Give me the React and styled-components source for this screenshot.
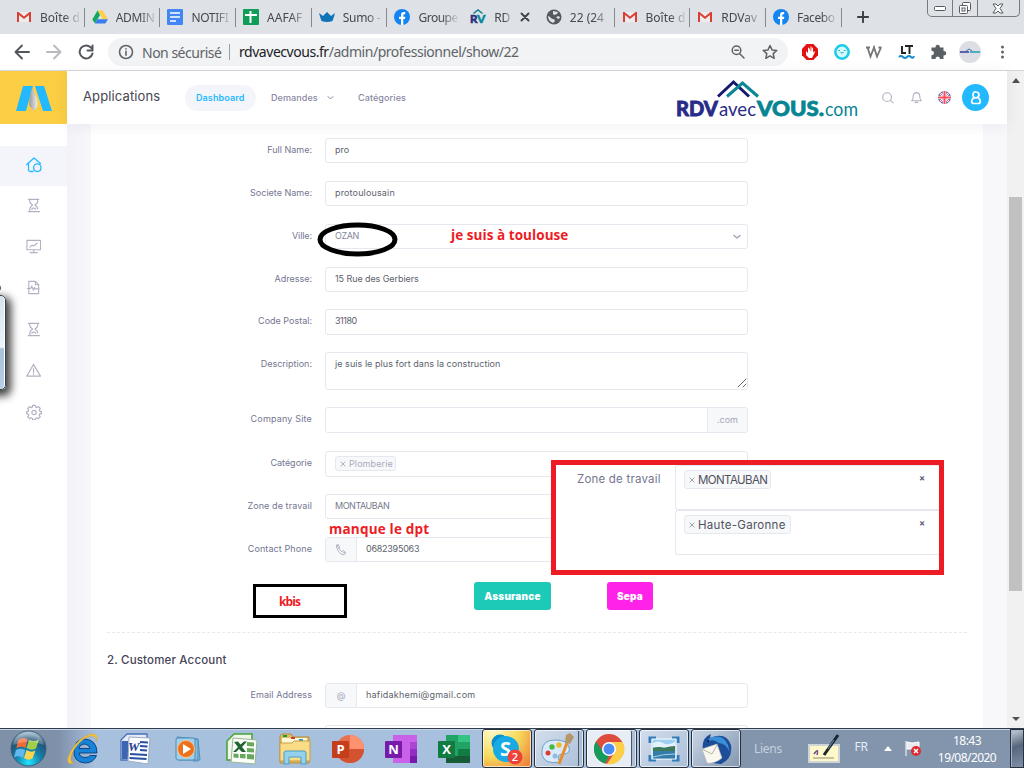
import React from "react";
import styled, { createGlobalStyle, css } from "styled-components";

const Global = createGlobalStyle`
  *, *::before, *::after { box-sizing: border-box; }
  body { margin: 0; overflow: hidden; }
`;
const ui = `"Noto Sans", "Open Sans", sans-serif`;
const web = `Inter, "Open Sans", sans-serif`;

const Screen = styled.div`
  position: relative; width: 1024px; height: 768px; overflow: hidden;
  display: flex; flex-direction: column; background: #fff; font-family: ${web};
`;

/* Browser chrome */
const TabStrip = styled.div`
  height: 34px; flex: none; display: flex; align-items: stretch; background: #dee1e6;
  padding-left: 8px; font: 12px ${ui}; color: #45494d;
`;
const Tab = styled.div`
  width: 75.7px; flex: none; padding-left: 8px; display: flex; align-items: center; gap: 8px; position: relative;
  svg { flex: none; }
  ${(p) => p.$line && css`&::after { content: ""; position: absolute; right: -1px; top: 8px; width: 1px; height: 19px; background: #85888c; }`}
  ${(p) => p.$active && css`background: #fff; border-radius: 8px 8px 0 0;`}
`;
const TabText = styled.span`
  width: ${(p) => p.$w || 38}px; white-space: nowrap; letter-spacing: ${(p) => p.$ls || 0}px;
  mask-image: linear-gradient(90deg, #000 60%, transparent 104%);
`;
const NewTab = styled.div`display: flex; align-items: center; padding-left: 16px; width: 86px;`;
const WindowButtons = styled.div`
  width: 93px; height: 17px; display: flex; border: 1px solid #777a80; border-top: 0; border-radius: 0 0 5px 5px;
`;
const WindowButton = styled.div`
  width: ${(p) => p.$w}px; display: flex; align-items: center; justify-content: center;
  & + & { border-left: 1px solid #777a80; }
`;
const Toolbar = styled.div`
  height: 37px; flex: none; display: flex; align-items: center; background: #fff; border-bottom: 1px solid #d4d7dc;
`;
const NavButtons = styled.div`display: flex; gap: 16px; padding-left: 14px; width: 108px; svg { flex: none; }`;
const Omnibox = styled.div`
  width: 680px; height: 28px; border-radius: 14px; background: #f1f3f4; display: flex; align-items: center;
  padding: 0 10px; font: 14px ${ui}; color: #5f6368; white-space: nowrap; svg { flex: none; }
`;
const Insecure = styled.span`margin-left: 8px; width: 87px; letter-spacing: -0.5px;`;
const Url = styled.span`border-left: 1px solid #9a9da1; line-height: 16px; padding-left: 9px; flex: 1; letter-spacing: -0.46px; b { font-weight: 400; color: #202124; }`;
const OmniIcons = styled.span`display: flex; gap: 16px;`;
const Extensions = styled.div`display: flex; align-items: center; padding-left: 6px; svg { width: 32px; height: 24px; }`;

/* Web page */
const Page = styled.div`height: 657px; flex: none; display: flex;`;
const Side = styled.aside`width: 67px; background: #fff; display: flex; flex-direction: column; z-index: 1;`;
const Brand = styled.div`height: 53px; background: #fbce44; display: flex; align-items: center; justify-content: center; margin-bottom: 22px;`;
const SideItem = styled.div`
  height: ${(p) => p.$h || 41.2}px; display: flex; align-items: center; justify-content: center; padding-bottom: 2px;
  background: ${(p) => (p.$on ? "#f4f5fb" : "transparent")}; color: ${(p) => (p.$on ? "#22b9ff" : "#b0b2c3")};
`;
const Main = styled.main`width: 940px; display: flex; flex-direction: column;`;
const Header = styled.header`
  height: 53px; flex: none; background: #fff; display: flex; align-items: center; padding-left: 16px; z-index: 1;
  box-shadow: 0 2px 14px rgba(82, 63, 105, 0.08);
`;
const AppTitle = styled.div`width: 102px; font-size: 13px; color: #46464f; letter-spacing: 0.12px; padding-bottom: 3px;`;
const NavLink = styled.div`
  height: 26px; border-radius: 13px; padding: 0 11px; display: flex; align-items: center; font-size: 9px; gap: 9px;
  width: ${(p) => p.$w}px; margin-right: ${(p) => p.$mr || 0}px; color: ${(p) => (p.$on ? "#22b9ff" : "#8a88a2")};
  background: ${(p) => (p.$on ? "#f4f5fb" : "none")};
  font-weight: ${(p) => (p.$on ? 600 : 500)}; letter-spacing: ${(p) => p.$ls || 0}px; white-space: nowrap;
  svg { flex: none; }
`;
const HeaderRight = styled.div`
  margin-left: auto; width: 332px; display: flex; align-items: center;
`;
const HeaderIcons = styled.div`display: flex; align-items: center; gap: 15px; margin-left: 22px;`;
const Avatar = styled.div`
  width: 27px; height: 27px; margin-left: -4px; border-radius: 50%; background: #22b9ff; display: flex; align-items: center; justify-content: center;
`;
const Backdrop = styled.div`
  flex: 1; padding: 0 24px; background: linear-gradient(90deg, #f2f2f8 0, #f8f8fb 24px);
`;
const Card = styled.section`height: 100%; overflow: hidden; background: #fff; padding: 14px 16px 0; display: flex; flex-direction: column;`;
const FieldRow = styled.div`
  display: flex; flex: none; height: ${(p) => p.$h || 25}px; margin-bottom: ${(p) => p.$gap || 18}px;
`;
const Label = styled.label`
  width: 205px; margin-right: 13px; text-align: right; font-size: 9px; line-height: 24px; color: #747691; letter-spacing: ${(p) => p.$ls || 0}px;
`;
const Field = styled.div`
  width: 423px; border: 1px solid #e6e8f0; border-radius: 3px; display: flex; font-size: 9px; color: #5c5f6c;
  line-height: 22px; letter-spacing: ${(p) => p.$ls || 0}px; overflow: hidden;
`;
const Value = styled.span`padding-left: 9px; flex: 1; color: ${(p) => p.$c || "inherit"};`;
const Addon = styled.span`
  width: ${(p) => p.$w}px; background: #f7f8fa; color: #a1a4b6; display: flex; align-items: center; justify-content: center;
  border: 0 solid #e6e8f0; border-${(p) => p.$edge}-width: 1px; letter-spacing: 0;
`;
const Chip = styled.span`
  border: 1px solid #e6e8f0; background: #f7f8fa; border-radius: 3px; white-space: nowrap; display: flex; align-items: center; gap: 3px;
  svg { flex: none; }
  ${(p) => p.$large
    ? css`height: 19px; padding: 0 3px 0 4px; color: #50525c; font-size: 11.5px; width: ${p.$w}px; letter-spacing: ${p.$ls}px;`
    : css`height: 15px; padding: 0 4px; margin: 4px 0 0 9px; color: #a9abbb; width: 61px; letter-spacing: 0.1px;`}
`;
const Corner = styled.span`align-self: flex-end; display: flex; padding: 0 0 1px;`;
const Chevron = styled.span`display: flex; align-items: center; padding-right: 6px;`;
const Actions = styled.div`display: flex; gap: 56px; padding: 2px 0 0 367px; height: 52px; flex: none;`;
const Action = styled.button`
  width: ${(p) => p.$w}px; height: 28px; border: 0; border-radius: 3px; background: ${(p) => p.$bg}; color: #fff;
  font: 900 10px ${web}; padding: 0 0 1px; letter-spacing: ${(p) => p.$ls}px;
`;
const Heading = styled.h3`
  margin: 0 0 12px; height: 39px; flex: none; border-top: 1px dashed #e8e9f0;
  font-size: 11.5px; font-weight: 500; color: #464457; line-height: 54px; letter-spacing: 0.17px;
`;
const ScrollBar = styled.div`width: 17px; background: #f1f1f1; display: flex; flex-direction: column; align-items: center; padding: 7px 0 6px;`;
const Thumb = styled.div`margin: 114px 0 auto; width: 13px; height: 394px; background: #c1c1c1;`;

/* Marks drawn over the page */
const Oval = styled.svg`position: absolute; left: 317px; top: 222px;`;
const Note = styled.div`
  position: absolute; left: ${(p) => p.$x}px; top: ${(p) => p.$y}px; font: 700 ${(p) => p.$s}px/18px "Open Sans", sans-serif;
  letter-spacing: ${(p) => p.$ls || 0}px; color: #ed1c24; white-space: nowrap;
`;
const Kbis = styled.div`
  position: absolute; left: 253px; top: 584px; width: 94px; height: 34px; border: 3px solid #000; background: #fff;
  padding: 1px 0 0 23px; font: 700 12px/28px "Open Sans", sans-serif; letter-spacing: -0.9px; color: #ed1c24;
`;
const Pasted = styled.div`
  position: absolute; left: 551px; top: 460px; width: 393px; height: 115px; border: 5px solid #ed1c24; background: #fff; display: flex;
`;
const PastedLabel = styled.div`width: 119px; padding-left: 21px; font-size: 11.5px; color: #747691; line-height: 28px; white-space: nowrap; letter-spacing: 0.2px;`;
const PastedFields = styled.div`flex: 1;`;
const PastedField = styled.div`
  height: 45px; border: 1px solid #e6e8f0; border-right: 0; border-radius: 3px 0 0 3px; padding: 4px 14px 0 8px; display: flex; justify-content: space-between;
`;
const Clear = styled.span`font: 700 9px/15px ${web}; color: #62647a;`;
const Gadget = styled.div`
  position: absolute; left: -14px; top: 295px; width: 20px; height: 95px; border: 1px solid #38434c; border-radius: 5px; z-index: 2;
  background: linear-gradient(#d5e3ee, #edf4fa 55%, #a9c2dc 57%, #b6cee6); box-shadow: inset -1px 0 #fff, 3px 4px 9px 2px rgba(0,0,0,.75);
`;
const GadgetDot = styled.div`position: absolute; left: -4px; top: 285px; width: 5px; height: 6px; border-radius: 50%; background: #555; z-index: 2;`;

/* Taskbar */
const Taskbar = styled.footer`
  height: 40px; flex: none; display: flex; border-top: 1px solid #303b4b; box-shadow: inset 0 1px #c9d8e9;
  background: linear-gradient(90deg, #7f90a9 0, #7f90a9 58px, #a7c0de 95px, #a7c0de 738px, #8295ad 741px); font-family: ${ui}; z-index: 3;
`;
const Slot = styled.div`
  width: ${(p) => p.$w || 53}px; flex: none; display: flex; align-items: center; justify-content: center;
`;
const Tiles = styled.div`display: flex; flex: none; gap: 2px; padding-left: 2px; width: 261px;`;
const Tile = styled.div`
  width: 50.2px; flex: none; height: 39px; border: 1px solid #27313e; border-radius: 3px; display: flex; align-items: center; justify-content: center;
  background: ${(p) => p.$bg || "linear-gradient(135deg,#d3deec,#aabfd8)"}; box-shadow: inset 0 0 0 1px rgba(255,255,255,.65);
  ${(p) => p.$stack && css`box-shadow: inset 0 0 0 1px rgba(255,255,255,.65), inset -4px 0 #aabed7, inset -5px 0 #4a5666; padding-right: 5px;`}
`;
const Tray = styled.div`flex: 1; display: flex; align-items: center; color: #e6edf5; font-size: 12px; margin-left: 1px;`;
const TrayItem = styled.div`width: ${(p) => p.$w}px; flex: none; display: flex; justify-content: center; padding-bottom: ${(p) => p.$up || 0}px; color: ${(p) => p.$c || "#e6edf5"}; letter-spacing: -0.3px; svg { flex: none; }`;
const Clock = styled.div`width: 84px; margin-left: 7px; flex: none; text-align: center; line-height: 17px; font-size: 12px; letter-spacing: -0.55px; color: #fff;`;
const ShowDesktop = styled.div`width: 14px; flex: none; height: 39px; margin-left: auto; border: 1px solid #29323e; background: linear-gradient(160deg,#c5d0dc,#56667c 45%,#7e90a8); box-shadow: inset 1px 1px #a6b4c4;`;

/* Icons */
const Gmail = () => (
  <svg width="16" height="16"><path d="M2 3h12v10H2z" fill="#ececec" /><path d="M1 3v10h2V6l5 4 5-4v7h2V3h-1.5L8 7.5 2.500 3z" fill="#d93f35" /></svg>
);
const Drive = () => (
  <svg width="16" height="16"><path d="M5.500 1.500h5L16 10.500h-5z" fill="#ffcf44" /><path d="M5.500 1.500 8 6 3 14.500.300 10.500z" fill="#11a861" /><path d="M5.500 10.300H16L13.300 14.500H3z" fill="#3a7df0" /></svg>
);
const Docs = () => (
  <svg width="16" height="16"><rect width="16" height="16" rx="1" fill="#4285f4" /><path d="M3 4h10M3 8h10M3 12h6" stroke="#fff" strokeWidth="1.700" /></svg>
);
const Sheets = () => (
  <svg width="16" height="16"><rect width="16" height="16" rx="1" fill="#109d58" /><path d="M2 6h12M7.500 2v12" stroke="#fff" strokeWidth="2" /></svg>
);
const Crown = () => (
  <svg width="16" height="16"><path d="M0 4q2 1.500 4 3l4-4 4 4q2-1.500 4-3-1 4-2.500 8-5.500 2-11 0Q1 8 0 4z" fill="#1173b7" /></svg>
);
const Facebook = () => (
  <svg width="16" height="16"><circle cx="8" cy="8" r="8" fill="#1385f0" /><path d="M7 16v-6H5V7.700h2V6q0-3 2.700-3h1.500v2.200H10Q9.300 5.200 9.300 6v1.700h2L11 10H9.300v6z" fill="#fff" /></svg>
);
const RdvFavicon = () => (
  <svg width="16" height="16"><path d="M3.500 4.500 8 1l4.500 3.500" fill="none" stroke="#0c7f91" strokeWidth="1.500" /><text x="0" y="14" fontFamily="Lato" fontWeight="900" fontSize="11.500" fill="#29317e" stroke="#29317e" strokeWidth=".5">R</text><text x="7" y="14" fontFamily="Lato" fontWeight="900" fontSize="12" fill="#06889a" stroke="#06889a" strokeWidth=".5">V</text></svg>
);
const Globe = () => (
  <svg width="16" height="16"><circle cx="8" cy="8" r="7.500" fill="#56595d" /><path d="M2 7q2 .5 3 2t3 1l1 2-2 2Q2 12 2 7zM7 2l5 1-1 2-3 1-1-1zM10 8l3-1 1 2-2 1z" fill="#dee1e6" /></svg>
);
const Stroke = ({ d, s = 16, w = 1.2, c = "currentColor", vb = 16 }) => (
  <svg width={s} height={s} viewBox={`0 0 ${vb} ${vb}`} fill="none" stroke={c} strokeWidth={w} strokeLinejoin="round" strokeLinecap="round"><path d={d} /></svg>
);
const hourglass = "M2.500 1.500h11M2.500 14.500h12M4 1.500v2.500q.5 2 3 3.500Q4.500 9.500 4 12v2.500M12.500 1.500v2.500q-.5 2-3 3.500 2.500 2 3 4M6 12l2.300-1.500 2.200 1.500";
const sideIcons = [
  hourglass,
  "M1 1.500h14.500v10H1zM8.200 11.500V14.500M4.500 14.500h7.500M4 8.500l2.500-2 1.500 1 4-3",
  "M3 1.500h7l3.500 3.500v9.500H3zM10 1.500v3.500h3.500M1.500 9H5l1-2.500 2 4.500 1-3 1 1.500h4",
  hourglass,
  "M8 1.500 15.500 14H.800zM8 6v4M8 11.800v.4",
];
const HomeIcon = () => <Stroke d="M.800 7.500 8 1l6.500 5.500M2.500 6.500V13q0 1.500 2 1.500h2.500M15 10.500a3.700 3.700 0 1 0-7.400 0q0 4 3.700 4t3.700-4" w={1.3} />;
const Gear = () => (
  <svg width="16" height="16" fill="none" stroke="#b0b2c3" strokeWidth="1.200" strokeLinejoin="round"><path d="M6.700 1.300h2.600l.4 1.800 1.200.5 1.600-1 1.800 1.900-1 1.500.5 1.200 1.600.4v2.100l-1.700.4-.5 1.200 1 1.600-1.800 1.800-1.500-1-1.200.5-.4 1.600H6.700l-.4-1.600-1.200-.5-1.600 1-1.800-1.900 1-1.500-.5-1.200-1.600-.4V7.600l1.600-.4.5-1.200-1-1.600 1.800-1.800 1.600 1 1.200-.5z" /><circle cx="8" cy="8.500" r="2.200" /></svg>
);
const SiteLogo = () => (
  <svg width="184" height="42" viewBox="0 0 184 42">
    <g fill="none" strokeWidth="3"><path d="M43 19.500 58.500 5 74 19.500" stroke="#151a70" /><path d="m52 19.500 15.500-13.500L83 19.500" stroke="#0c8795" /></g>
    <g fontFamily="Lato" fontSize="21.500">
      <text x="1" y="39" fontWeight="900" fill="#292b88" stroke="#292b88" strokeWidth=".8" textLength="42" lengthAdjust="spacingAndGlyphs">RDV</text>
      <text x="44" y="39" fontSize="20" fill="#292b88" textLength="37" lengthAdjust="spacingAndGlyphs">avec</text>
      <text x="82" y="39" fontWeight="900" fill="#078592" stroke="#078592" strokeWidth=".8" textLength="67" lengthAdjust="spacingAndGlyphs">VOUS.</text>
      <text x="150" y="39" fontSize="20" fill="#078592" textLength="33" lengthAdjust="spacingAndGlyphs">com</text>
    </g>
  </svg>
);
const BrandMark = () => (
  <svg width="38" height="26"><defs><linearGradient id="bm" x1="0" x2="1"><stop stopColor="#9b9b9b" /><stop offset="1" stopColor="#eee" /></linearGradient></defs><path d="M8 1h10L11 26H1zM20 1h9l8 25h-9z" fill="#22b9ff" /><path d="M17 3q7 11 5 19l-3.500 4-4-5q-1-8 2.500-18" fill="url(#bm)" /></svg>
);
const Flag = () => (
  <svg width="13" height="13" viewBox="0 0 14 14"><clipPath id="fc"><circle cx="7" cy="7" r="7" /></clipPath><g clipPath="url(#fc)"><path fill="#4555a5" d="M0 0h14v14H0z" /><path d="m0 0 14 14M14 0 0 14" stroke="#fff" strokeWidth="2.400" /><path d="m0 0 14 14M14 0 0 14" stroke="#f25563" strokeWidth="1" /><path d="M7 0v14M0 7h14" stroke="#fff" strokeWidth="4" /><path d="M7 0v14M0 7h14" stroke="#fb4f60" strokeWidth="2.200" /></g></svg>
);
const AvatarIcon = () => (
  <svg width="14" height="16" fill="none" stroke="#fff" strokeWidth="1.700"><path d="M7 2q3 0 3 2.800T7 7.800 4 4.800 7 2M5 7.700q-2.300 1.300-2.300 3.500 0 2.300 1.800 2.300h5q1.800 0 1.800-2.300Q11.300 9 9 7.700" /></svg>
);
const Orb = () => (
  <svg width="37" height="37" viewBox="0 0 37 37"><defs><radialGradient id="ob" cy="90%" r="90%"><stop stopColor="#20e4ff" /><stop offset=".4" stopColor="#1582ad" /><stop offset=".75" stopColor="#225275" /><stop offset="1" stopColor="#b9d2df" /></radialGradient></defs><circle cx="18.500" cy="18.500" r="17.500" fill="url(#ob)" stroke="#40617b" /><path d="M8 10q5-3.500 9.500-.5l-2 8.500q-4-2.500-9 0z" fill="#f26b35" /><path d="M19 10q5 2.500 10-.5l-3 9q-4 2.500-9.500-.5z" fill="#a1cf4a" /><path d="M6 20q4.500-2.500 9 0l-2 8q-4-3-9-.5z" fill="#62b7ee" /><path d="M16.500 20q5 3 9 .5l-3 8q-4 2.500-8.500-.5z" fill="#fbd450" /><path d="M3 15Q6 3 18.500 2.500 30 3 34 15 19 8 3 15" fill="#fff" opacity=".25" /></svg>
);
const IE = () => (
  <svg width="34" height="34" viewBox="0 0 34 34"><path d="M31 21H13q1 4.500 6 4.500 4 0 5-2h6.500q-3 7.500-11.500 7.500Q7 30 8 18 9 7 19 7q12 1 12 14zM13 16.500h11q-1-4-5-4.500-5 0-6 4.500" fill="#1683d8" stroke="#0d4585" /><path d="M8 31Q-3 34 5 19 13 5 25 2q9-1 5 8 1-6-4-6-8 0-17 12Q1 29 8 31" fill="#f6c63b" stroke="#c7962a" strokeWidth=".4" /></svg>
);
const OldWord = () => (
  <svg width="34" height="34" viewBox="0 0 34 34"><path d="M8 2h20v26H2V8z" fill="#e4ecfa" stroke="#4a6fb8" strokeWidth="1.300" /><path d="M3 9h6l2 18H3z" fill="#3d66b2" /><path d="m10 5 21 1-2 26-20-3z" fill="#fbfcff" stroke="#9fabc0" /><path d="m21 10 8 .5M21 14l7.500.5M21 18l7 .5M11 22l17 1M10.500 26l17 1" stroke="#2b4fa0" strokeWidth="2" /><text x="9" y="19" fontFamily="Liberation Serif" fontWeight="700" fontStyle="italic" fontSize="13" fill="#233f8e">W</text></svg>
);
const OldExcel = () => (
  <svg width="34" height="34" viewBox="0 0 34 34"><path d="M9 2h18v26H2V9z" fill="#eef7ea" stroke="#4ba33b" strokeWidth="1.600" /><path d="m8 6 24 2-2 24-24-2z" fill="#fafdf8" stroke="#9db39a" /><g fill="#68a85c"><path d="m22 10 7 .5v4l-7-.5zM22 16l7 .5v4l-7-.5zM22 22l7 .5v5l-7-.5zM15 22h5.500v4.500l-5.500-.5zM8.500 21.500 13.500 22v4l-5-.4z" /></g><path d="m9 10 4-.5 2.500 3 3.500-3h3l-5 5.500 4 5h-4l-3-3-3 3H8l5-5z" fill="#1f6330" /></svg>
);
const Media = () => (
  <svg width="30" height="28"><path d="m3 2 21 2 2 21H5zM20 3l4 2v21h-5" fill="#86bce1" stroke="#5290b8" /><rect x="2" y="3" width="19" height="22" rx="2" fill="#a1d0ec" stroke="#4a91b8" /><circle cx="12" cy="14" r="8.500" fill="#ed711b" stroke="#ffc087" /><path d="m9 9 8 5-8 5z" fill="#fff" /></svg>
);
const Explorer = () => (
  <svg width="34" height="32"><path d="M2 3q1-2 3-2h8l2 3h16v26H2z" fill="#dfbc65" stroke="#b68d35" /><path d="M4 5h25v6H4z" fill="#fff9d5" /><path d="M5 3h4" stroke="#12a13b" strokeWidth="2" /><path d="M13 5h4" stroke="#c83d2c" strokeWidth="2" /><path d="M21 7h4" stroke="#2498df" strokeWidth="2" /><path d="M2 10h12l2-2h16v20H2z" fill="#f9dc85" stroke="#c59f49" /><path d="M6 31V20q0-2 2-2h18q2 0 2 2v11h-5v-7H11v7z" fill="#93d1ed" stroke="#4d9cc5" /></svg>
);
const Office = ({ letter, c, colors }) => (
  <svg width="34" height="30" viewBox="0 0 34 30">{colors
    ? <><path d="M9 1h24v28H9z" fill={colors[0]} /><path d="M21 1h12v7H21z" fill={colors[1]} /><path d="M21 8h12v7H21z" fill={colors[2]} /><path d="M21 15h12v7H21z" fill={colors[3]} /><path d="M9 22h24v7H9z" fill={colors[4]} /></>
    : <><circle cx="19" cy="15" r="14" fill="#e96f50" /><path d="M19 1a14 14 0 0 1 14 14H19z" fill="#ff9070" /><path d="M5 15h28a14 14 0 0 1-28 0" fill="#d35230" /></>}
    <rect x="1" y="7" width="17" height="17" rx="1" fill={c} /><text x="9.500" y="20" textAnchor="middle" fontFamily="Open Sans" fontWeight="700" fontSize="13" fill="#fff">{letter}</text></svg>
);
const OneNote = () => (
  <svg width="34" height="30"><path d="M9 1h24v28H9z" fill="#c962e8" /><path d="M26 8h7v7h-7z" fill="#ad45d3" /><path d="M26 15h7v7h-7z" fill="#942dc1" /><path d="M26 22h7v7h-7z" fill="#7719aa" /><rect x="1" y="7" width="17" height="17" rx="1" fill="#7719aa" /><text x="9.500" y="20" textAnchor="middle" fontFamily="Open Sans" fontWeight="700" fontSize="13" fill="#fff">N</text></svg>
);
const Skype = () => (
  <svg width="32" height="34"><circle cx="9" cy="11" r="8.500" fill="#0a91cd" /><circle cx="15" cy="17" r="13" fill="#18aae5" /><text x="14.500" y="24" textAnchor="middle" fontFamily="Open Sans" fontWeight="700" fontSize="20" fill="#fff">S</text><circle cx="24" cy="25" r="7.500" fill="#ef4339" /><text x="24" y="29" textAnchor="middle" fontFamily="Open Sans" fontWeight="600" fontSize="11" fill="#fff">2</text></svg>
);
const Paint = () => (
  <svg width="34" height="34"><path d="M2 18Q3 8 15 8t14 7-6 7-3 8Q5 33 2 23z" fill="#d8eafb" stroke="#6f9fc1" /><circle cx="8" cy="21" r="2.500" fill="#df3b2f" /><circle cx="12" cy="15" r="2.700" fill="#49b943" /><circle cx="19" cy="13" r="2.700" fill="#eeb92e" /><circle cx="15" cy="24" r="2.500" fill="#8fbdd9" /><path d="m19 32 8-21" stroke="#e98b30" strokeWidth="3" /><path d="m25 10 1-7 4-2 4 4-4 7z" fill="#b39669" /></svg>
);
const Chrome = () => (
  <svg width="32" height="32"><circle cx="16" cy="16" r="15" fill="#de4c3e" /><path d="M3 8.500 11 20l5 3-4 7.500A15 15 0 0 1 3 8.500" fill="#159b5b" /><path d="M16 9h13.500A15 15 0 0 1 14 31l8-12z" fill="#fdcf49" /><circle cx="16" cy="16" r="7" fill="#fff" /><circle cx="16" cy="16" r="5.500" fill="#4b8cf4" /></svg>
);
const Picture = () => (
  <svg width="32" height="28"><path d="M2 8V3h6M24 3h6v5M30 20v5h-6M8 25H2v-5" fill="none" stroke="#317dbb" strokeWidth="3" /><rect x="4" y="4" width="24" height="20" fill="#9dd0f2" stroke="#fff" /><path d="M5 8q6-3 10 0t12-1v5H5z" fill="#e3f2fb" /><path d="M5 13q6-2 11 0 6-2 11-2v6H5z" fill="#3f7a58" /><path d="M5 16h22v7.500H5z" fill="#347caa" /><path d="M5 22q10-3 22-3" stroke="#a6d0e6" fill="none" /></svg>
);
const Bird = () => (
  <svg width="34" height="34"><path d="M4 18Q2 6 12 2l-1 4Q27-1 32 13q2 14-10 19Q6 32 4 18" fill="#1d4d98" /><path d="M11 6q13-5 18 7l2 8Q27 11 20 11q-6-5-13-1z" fill="#3a8fd8" /><path d="m3 17 15-5 5 14q-7 6-15 5z" fill="#faf7ef" stroke="#bbb" strokeWidth=".6" /><path d="m3 17 10 5 5-9" fill="none" stroke="#b9b3a6" /><circle cx="9" cy="9" r="1.200" fill="#0c2a5e" /></svg>
);

const tabs = [
  [Gmail, "Boîte d", 1], [Drive, "ADMIN", 1, false, -0.3], [Docs, "NOTIFI", 1, false, -0.35], [Sheets, "AAFAF", 1], [Crown, "Sumo -", 1, false, -0.3], [Facebook, "Groupe", 0, false, -0.5],
  [RdvFavicon, "RD", 0, true], [Globe, "22 (24", 1], [Gmail, "Boîte d", 1], [Gmail, "RDVav", 1], [Facebook, "Facebo", 1, false, -0.4],
];

function BrowserChrome() {
  return (
    <>
      <TabStrip>
        {tabs.map(([Icon, text, line, active, ls], i) => (
          <Tab key={i} $line={line} $active={active}>
            <Icon /><TabText $w={active ? 18 : 40} $ls={ls}>{text}</TabText>
            {active && <Stroke d="M1.500 1.500l7 7M8.500 1.500l-7 7" s={10} vb={10} w={1.9} c="#3f4347" />}
          </Tab>
        ))}
        <NewTab><Stroke d="M6 .800v10.400M.800 6h10.400" s={12} vb={12} w={1.9} c="#3d4043" /></NewTab>
        <WindowButtons>
          <WindowButton $w={25}><svg width="12" height="5"><rect x=".5" y=".5" width="11" height="4" rx="1" fill="#fff" stroke="#555960" /></svg></WindowButton>
          <WindowButton $w={25}><svg width="14" height="14" fill="#fff" stroke="#555960"><rect x="4.500" y="1.500" width="8" height="8" rx="1" /><rect x="1.500" y="4.500" width="8" height="8" rx="1" /><rect x="4" y="7" width="3" height="3" /></svg></WindowButton>
          <WindowButton $w={42}><svg width="12" height="11"><path d="M1 1h3l2 2 2-2h3L8 5.500 11 10H8L6 8l-2 2H1l3-4.500z" fill="#fff" stroke="#555960" /></svg></WindowButton>
        </WindowButtons>
      </TabStrip>
      <Toolbar>
        <NavButtons>
          <Stroke d="M15 8H2M8 1.500 1.500 8 8 14.500" w={1.9} c="#53575c" />
          <Stroke d="M1 8h13M8 1.500 14.500 8 8 14.500" w={1.9} c="#b8babd" />
          <Stroke d="M13.500 4.200A6.500 6.500 0 1 0 14.500 9.500M14.500 1.500v5h-5" w={2} c="#53575c" />
        </NavButtons>
        <Omnibox>
          <Stroke d="M8 1.500a6.500 6.500 0 1 0 0 13 6.500 6.500 0 1 0 0-13M8 7.200v4M8 4.700v.2" w={1.6} c="#5f6368" />
          <Insecure>Non sécurisé</Insecure>
          <Url><b>rdvavecvous.fr</b>/admin/professionnel/show/22</Url>
          <OmniIcons>
            <Stroke d="M6.500 2a4.300 4.300 0 1 0 0 8.600 4.300 4.300 0 1 0 0-8.600M10 10l4 4M4.800 6.300h3.500" w={1.5} c="#5f6368" />
            <Stroke d="m8 1.500 2 4.400 4.800.5-3.600 3.200 1 4.700L8 11.900l-4.200 2.400 1-4.700L1.200 6.400 6 5.900z" w={1.5} c="#5f6368" />
          </OmniIcons>
        </Omnibox>
        <Extensions>
          <svg viewBox="0 0 32 24"><path d="M12.700 4h6.600L24 8.700v6.600L19.300 20h-6.600L8 15.300V8.700z" fill="#e41111" /><path d="M12 11v4l3 3h3l3-6-1-1-1 2V8l-1-.5-.5 4V6.500h-1v5L15 7.500l-1 .5v5z" fill="#fff" /></svg>
          <svg viewBox="0 0 32 24"><circle cx="16" cy="12" r="6.700" fill="#d4f8fb" stroke="#18cde5" strokeWidth="2.500" /><path d="M12.500 10.500h1.500M18 10.500h1.500M14.500 12.500q1.500 1 3 0" fill="none" stroke="#0aafc7" /></svg>
          <svg viewBox="0 0 32 24"><path d="m9.500 7.500 3 9 3.500-9 3 9 4-9M8 7.500h4M15 7.500h2M20.500 7.500h3" fill="none" stroke="#777" strokeWidth="1.800" /></svg>
          <svg viewBox="0 0 32 24"><path d="M12 6v7h4M15 6h8M19.500 6v8" fill="none" stroke="#222" strokeWidth="1.900" /><path d="M9 17q2-2 4 0t4 0 4 0 3-1" fill="none" stroke="#168bce" strokeWidth="2" /></svg>
          <svg viewBox="0 0 32 24"><path d="M10.500 7.500h3q0-2.800 2.200-2.800t2.200 2.800h3.600v3.600q2.700 0 2.700 2.200t-2.700 2.200V19H18q0-2.500-2.300-2.500T13.400 19H9.500v-3.800q2.500 0 2.500-2.200t-2.500-2.200V7.500z" fill="#5b6065" /></svg>
          <svg viewBox="0 0 32 24"><circle cx="16" cy="12" r="11" fill="#dddde5" /><path d="M6 12h9" stroke="#3940a5" strokeWidth="1.600" /><path d="m12 11 3-2 3 2" fill="none" stroke="#38709b" /><path d="M16 12h10" stroke="#25a5b8" strokeWidth="1.600" /></svg>
          <svg viewBox="0 0 32 24" fill="#5f6368"><circle cx="16.500" cy="7" r="1.500" /><circle cx="16.500" cy="12" r="1.500" /><circle cx="16.500" cy="17" r="1.500" /></svg>
        </Extensions>
      </Toolbar>
    </>
  );
}

function Row({ label, value, h, gap, ls, vls, valueColor, before, after, lead }) {
  return (
    <FieldRow $h={h} $gap={gap}>
      <Label $ls={ls}>{label}</Label>
      <Field $ls={vls}>{before}{lead || <Value $c={valueColor}>{value}</Value>}{after}</Field>
    </FieldRow>
  );
}

const SmallCross = ({ c }) => <Stroke d="M1 1l5 5M6 1 1 6" s={6} vb={7} w={1.1} c={c} />;
const Handset = () => <Stroke d="M2 1.500 4 1l2 3-1 1.500q1.500 3 3.500 4L10 8l3 2.500-.5 2Q9 15 4.500 9.500 1 5 2 1.500M4 1 3 3l2 2.500M13 10.500l-2 1-2-2" s={12} vb={15} w={1} />;

export default function App() {
  return (
    <Screen>
      <Global />
      <BrowserChrome />
      <Page>
        <Side>
          <Brand><BrandMark /></Brand>
          <SideItem $on $h={40}><HomeIcon /></SideItem>
          {sideIcons.map((d, i) => <SideItem key={i}><Stroke d={d} s={15} /></SideItem>)}
          <SideItem><Gear /></SideItem>
        </Side>
        <Main>
          <Header>
            <AppTitle>Applications</AppTitle>
            <NavLink $on $w={71} $mr={4} $ls={0.1}>Dashboard</NavLink>
            <NavLink $w={87} $ls={0.1}>Demandes<Stroke d="M1 2.500 3.500 5 6 2.500" s={7} vb={7} w={1} /></NavLink>
            <NavLink $w={80} $ls={0.1}>Catégories</NavLink>
            <HeaderRight>
              <SiteLogo />
              <HeaderIcons>
                <Stroke d="M7 2a5 5 0 1 0 0 10A5 5 0 1 0 7 2M11 11l3 2.500" s={14} w={1.3} c="#afb1c3" />
                <Stroke d="M2 12q2-2 2-6 .5-4 4-4t4 4q0 4 2 6zM6.500 14h3" s={13} w={1.3} c="#afb1c3" />
                <Flag />
                <Avatar><AvatarIcon /></Avatar>
              </HeaderIcons>
            </HeaderRight>
          </Header>
          <Backdrop>
            <Card>
              <Row label="Full Name:" value="pro" />
              <Row label="Societe Name:" value="protoulousain" vls={0.15} />
              <Row label="Ville:" value="OZAN" vls={-0.4} ls={-0.1} valueColor="#85879a" after={<Chevron><Stroke d="M1 2.500 4 5l3-2.500" s={8} vb={8} w={1.5} c="#a2a4b8" /></Chevron>} />
              <Row label="Adresse:" value="15 Rue des Gerbiers" vls={-0.08} gap={17} />
              <Row label="Code Postal:" value="31180" vls={-0.5} h={26} gap={17} />
              <Row label="Description:" value="je suis le plus fort dans la construction" vls={0.05} h={38} gap={17} after={<Corner><Stroke d="M1 9 9 1M6 9l3-3" s={10} vb={10} w={0.9} c="#555" /></Corner>} />
              <Row label="Company Site" ls={0.17} h={26} after={<Addon $w={40} $edge="left">.com</Addon>} />
              <Row label="Catégorie" h={26} gap={17} lead={<Chip><SmallCross />Plomberie</Chip>} />
              <Row label="Zone de travail" ls={0.1} value="MONTAUBAN" vls={-0.45} valueColor="#777a8b" />
              <Row label="Contact Phone" ls={0.1} value="0682395063" vls={-0.25} before={<Addon $w={31} $edge="right"><Handset /></Addon>} />
              <Actions>
                <Action $bg="#1dc9b7" $w={77} $ls={0.2}>Assurance</Action>
                <Action $bg="#ff23ea" $w={46} $ls={0.2}>Sepa</Action>
              </Actions>
              <Heading>2. Customer Account</Heading>
              <Row label="Email Address" ls={0.08} value="hafidakhemi@gmail.com" vls={0.23} gap={17} before={<Addon $w={31} $edge="right">@</Addon>} />
              <Row label="" value="" />
            </Card>
          </Backdrop>
        </Main>
        <ScrollBar>
          <svg width="8" height="5"><path d="m0 5 4-5 4 5z" fill="#505050" /></svg>
          <Thumb />
          <svg width="8" height="5"><path d="m0 0 4 4 4-4z" fill="#505050" /></svg>
        </ScrollBar>
      </Page>
      <Taskbar>
        <Slot $w={56}><Orb /></Slot>
        <Slot><IE /></Slot>
        <Slot><OldWord /></Slot>
        <Slot><Media /></Slot>
        <Slot><OldExcel /></Slot>
        <Slot><Explorer /></Slot>
        <Slot><Office letter="P" c="#c43e1c" /></Slot>
        <Slot><OneNote /></Slot>
        <Slot><Office letter="X" c="#107c41" colors={["#21a366", "#33c481", "#21a366", "#107c41", "#185c37"]} /></Slot>
        <Tiles>
          <Tile $bg="radial-gradient(circle at 20% 0, #fff9c8, #f6da5b 50%, #ee873d 90%)"><Skype /></Tile>
          <Tile $stack><Paint /></Tile>
          <Tile $stack $bg="#e7edf5"><Chrome /></Tile>
          <Tile><Picture /></Tile>
          <Tile $bg="linear-gradient(135deg,#c7d5e6,#8497b0)"><Bird /></Tile>
        </Tiles>
        <Tray>
          <TrayItem $w={52} $c="#c5d1de">Liens</TrayItem>
          <TrayItem $w={60}><svg width="32" height="30"><path d="M1 11h30v17H1z" fill="#fff8c8" stroke="#ced5d9" strokeWidth="2" /><path d="M5 24h21" stroke="#8e8c78" /><path d="M6 20q5-7 3 1" fill="none" stroke="#6b458d" strokeWidth="1.500" /><path d="M16 21 30 1" stroke="#172531" strokeWidth="3" /><path d="m20 15 6-9" stroke="#7296a9" /></svg></TrayItem>
          <TrayItem $w={14} $up={5}>FR</TrayItem>
          <TrayItem $w={40}><svg width="8" height="5"><path d="m0 5 4-5 4 5z" fill="#fff" /></svg></TrayItem>
          <TrayItem $w={10}><svg width="17" height="17"><path d="M1 16V1M2 2l5 1 7-1v7H2z" fill="#e7ebef" stroke="#fff" /><circle cx="11" cy="11" r="5" fill="#dc2b31" /><path d="m9 9 4 4m0-4-4 4" stroke="#fff" strokeWidth="1.500" /></svg></TrayItem>
          <Clock>18:43<br />19/08/2020</Clock>
          <ShowDesktop />
        </Tray>
      </Taskbar>

      <Oval width="81" height="35"><ellipse cx="40.500" cy="17.500" rx="37.500" ry="14.500" fill="none" stroke="#000" strokeWidth="5" /></Oval>
      <Note $x={451} $y={226} $s={13.5} $ls={0.06}>je suis à toulouse</Note>
      <Note $x={329} $y={520} $s={13.5} $ls={0.2}>manque le dpt</Note>
      <Kbis>kbis</Kbis>
      <Pasted>
        <PastedLabel>Zone de travail</PastedLabel>
        <PastedFields>
          <PastedField><Chip $large $w={87} $ls={-0.6}><SmallCross c="#9a9cab" />MONTAUBAN</Chip><Clear>×</Clear></PastedField>
          <PastedField><Chip $large $w={107} $ls={0.3}><SmallCross c="#9a9cab" />Haute-Garonne</Chip><Clear>×</Clear></PastedField>
        </PastedFields>
      </Pasted>
      <GadgetDot />
      <Gadget />
    </Screen>
  );
}
